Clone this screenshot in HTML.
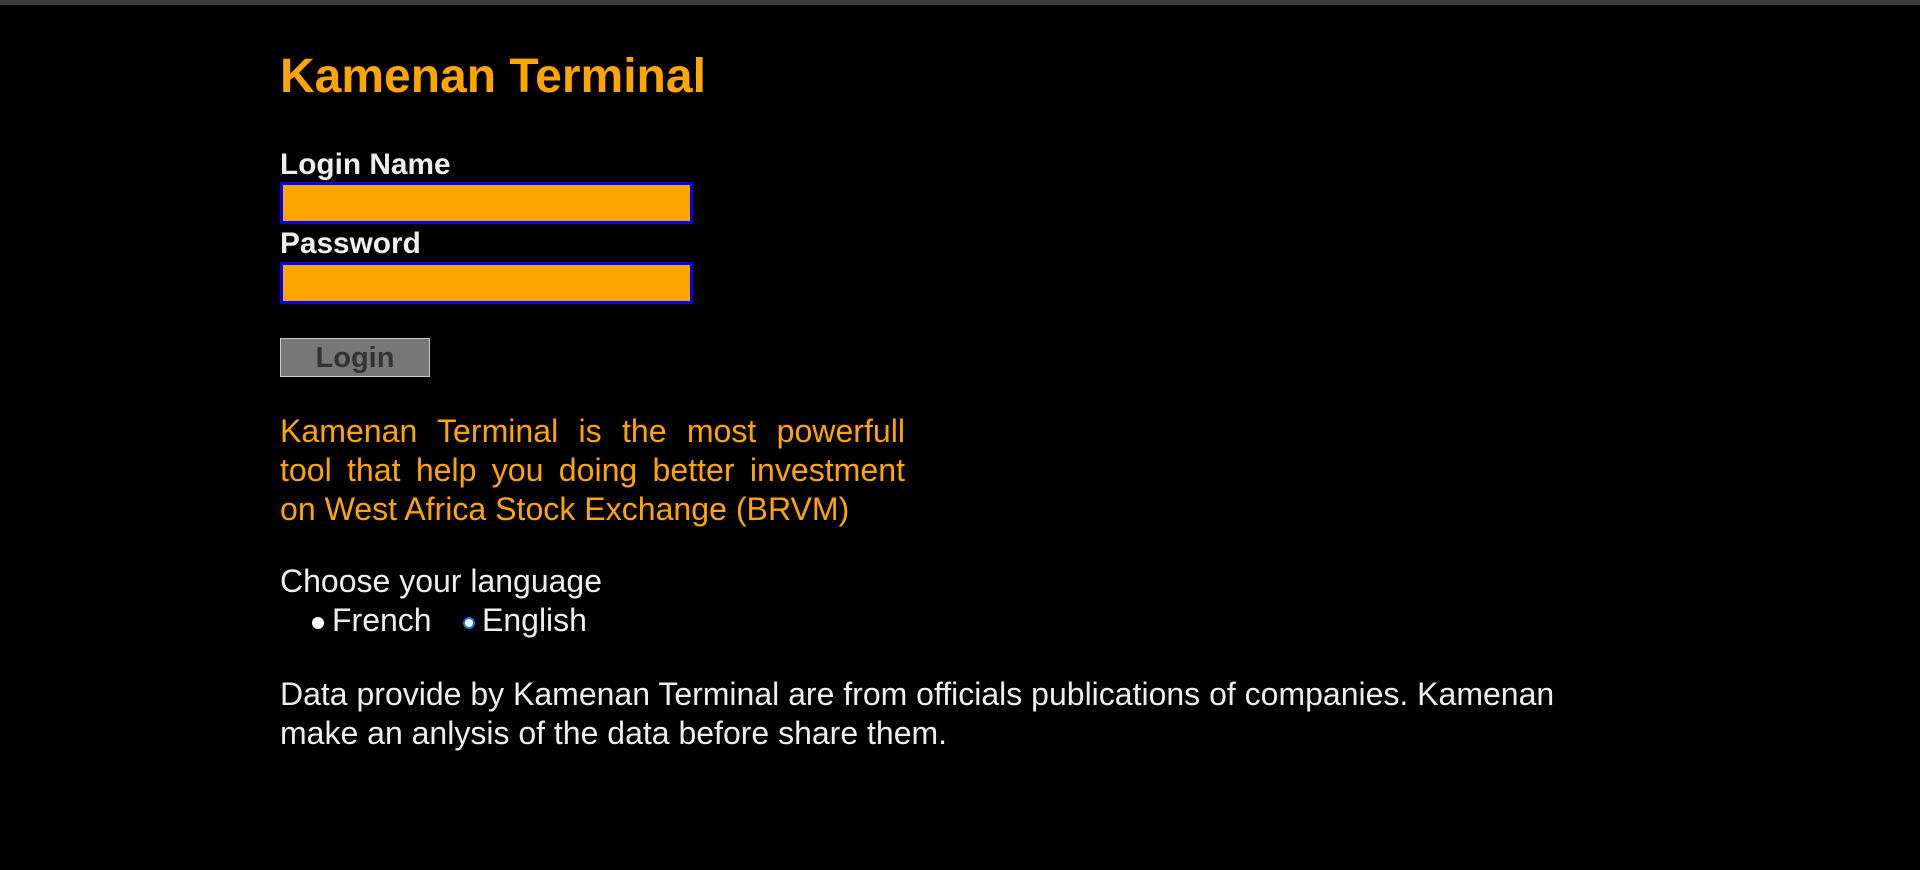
<!DOCTYPE html>
<html><head><meta charset="utf-8"><style>
html,body{margin:0;padding:0;background:#000;width:1920px;height:870px;overflow:hidden;font-family:"Liberation Sans",Arial,sans-serif}
.bar{position:absolute;left:0;top:0;width:1920px;height:5px;background:#3c3c3c}
.a{position:absolute;left:280px;white-space:nowrap}
.t{top:52px;font-size:48px;line-height:50px;font-weight:bold;color:#ffa500}
.lb{font-size:29.8px;line-height:34px;font-weight:bold;color:#eee}
.in{position:absolute;left:280px;width:407px;height:36px;background:#ffa500;border:3px solid #0000ff}
.btn{position:absolute;left:280px;top:338px;width:148px;height:37px;background:#777;border:1px solid #ccc;color:#333;font-weight:bold;font-size:29px;line-height:39px;text-align:center}
.p{position:absolute;left:280px;width:625px;top:412px;font-size:32.1px;line-height:39px;color:#ffa500;text-align:justify}
.w{color:#eee;font-size:32px;line-height:39px}
.r{position:absolute;width:12px;height:12px;border-radius:50%;background:#fff;box-sizing:border-box}
</style></head><body>
<div class="bar"></div>
<div class="a t">Kamenan Terminal</div>
<div class="a lb" style="top:148px">Login Name</div>
<div class="in" style="top:182px"></div>
<div class="a lb" style="top:227px">Password</div>
<div class="in" style="top:262px"></div>
<div class="btn">Login</div>
<div class="p">Kamenan Terminal is the most powerfull<br style="display:none">
<span style="display:inline">tool that help you doing better investment on West Africa Stock Exchange (BRVM)</span></div>
<div class="a w" style="top:562px">Choose your language</div>
<div class="r" style="left:312px;top:617px"></div>
<div class="a w" style="left:332px;top:601px">French</div>
<div class="r" style="left:463px;top:617px;border:2px solid #1a73e8"></div>
<div class="a w" style="left:482px;top:601px">English</div>
<div class="a w" style="top:675px;width:1300px;white-space:normal">Data provide by Kamenan Terminal are from officials publications of companies. Kamenan make an anlysis of the data before share them.</div>
</body></html>
